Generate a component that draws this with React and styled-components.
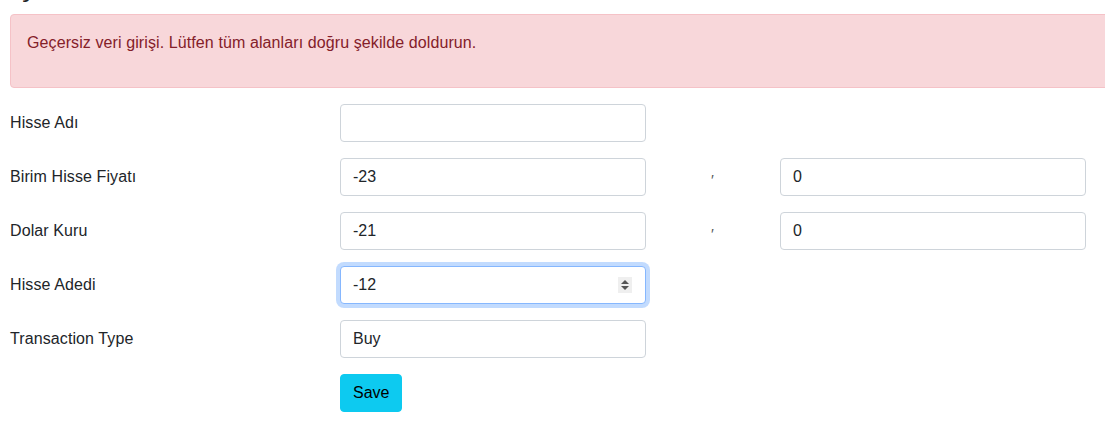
import React from "react";
import styled, { createGlobalStyle, css } from "styled-components";

const Global = createGlobalStyle`
  html, body {
    margin: 0;
    padding: 0;
    background: #fff;
    overflow: hidden;
  }
  body {
    font-family: "Liberation Sans", Arial, sans-serif;
    font-size: 16px;
    line-height: 1.5;
    letter-spacing: 0.1px;
    color: #212529;
  }
`;

const Page = styled.div`
  display: flow-root;
  width: 1140px;
  padding: 0 0 0 10px;
`;

/* heading sits mostly above the viewport, only the cedilla shows */
const Title = styled.h3`
  margin: -30px 0 0;
  height: 34px;
  font-size: 28px;
  line-height: 34px;
  font-weight: 700;
`;

const Alert = styled.div`
  margin: 10px 0 16px;
  padding: 16px;
  background: #f8d7da;
  border: 1px solid #f5c2c7;
  border-radius: 4px;
  color: #842029;

  p {
    margin: 0 0 16px;
  }
`;

const Form = styled.form`
  display: grid;
  grid-template-columns: 330px 306px 134px 306px;
  row-gap: 16px;
  align-items: center;
`;

const Label = styled.label`
  grid-column: 1;
`;

const Field = styled.div`
  position: relative;
  grid-column: ${({ col }) => col || 2};
`;

const Input = styled.input`
  display: block;
  box-sizing: border-box;
  width: 100%;
  height: 38px;
  padding: 6px 12px;
  font: inherit;
  color: #212529;
  background: #fff;
  border: 1px solid #ced4da;
  border-radius: 4px;
  outline: none;

  ${({ focused }) =>
    focused &&
    css`
      border-color: #86b7fe;
      box-shadow: 0 0 0 4px rgba(13, 110, 253, 0.25);
    `}
`;

const Spinner = styled.div`
  position: absolute;
  right: 14px;
  top: 11px;
  width: 14px;
  height: 16px;
  background: #efefef;
  display: flex;
  align-items: center;
  justify-content: center;
`;

const Mark = styled.span`
  grid-column: 3;
  padding: 4px 0 0 65px;
  font-size: 15px;
  color: #555;
  line-height: 1;
`;

const Button = styled.button`
  grid-column: 2;
  justify-self: start;
  height: 38px;
  padding: 6px 12px;
  font: inherit;
  color: #000;
  background: #0dcaf0;
  border: 1px solid #0dcaf0;
  border-radius: 4px;
`;

const rows = [
  { label: "Hisse Adı", value: "" },
  { label: "Birim Hisse Fiyatı", value: "-23", extra: "0" },
  { label: "Dolar Kuru", value: "-21", extra: "0" },
  { label: "Hisse Adedi", value: "-12", focused: true },
  { label: "Transaction Type", value: "Buy" },
];

export default function App() {
  return (
    <>
      <Global />
      <Page>
        <Title>İşlem</Title>
        <Alert>
          <p>Geçersiz veri girişi. Lütfen tüm alanları doğru şekilde doldurun.</p>
        </Alert>
        <Form onSubmit={(e) => e.preventDefault()}>
          {rows.map((r) => (
            <React.Fragment key={r.label}>
              <Label>{r.label}</Label>
              <Field>
                <Input defaultValue={r.value} focused={r.focused} />
                {r.focused && (
                  <Spinner>
                    <svg width="10" height="12" viewBox="0 0 10 12">
                      <path d="M5 1 L9 5 H1 Z" fill="#555" />
                      <path d="M5 11 L9 7 H1 Z" fill="#555" />
                    </svg>
                  </Spinner>
                )}
              </Field>
              {r.extra && (
                <>
                  <Mark>′</Mark>
                  <Field col={4}>
                    <Input defaultValue={r.extra} />
                  </Field>
                </>
              )}
            </React.Fragment>
          ))}
          <Button type="submit">Save</Button>
        </Form>
      </Page>
    </>
  );
}
